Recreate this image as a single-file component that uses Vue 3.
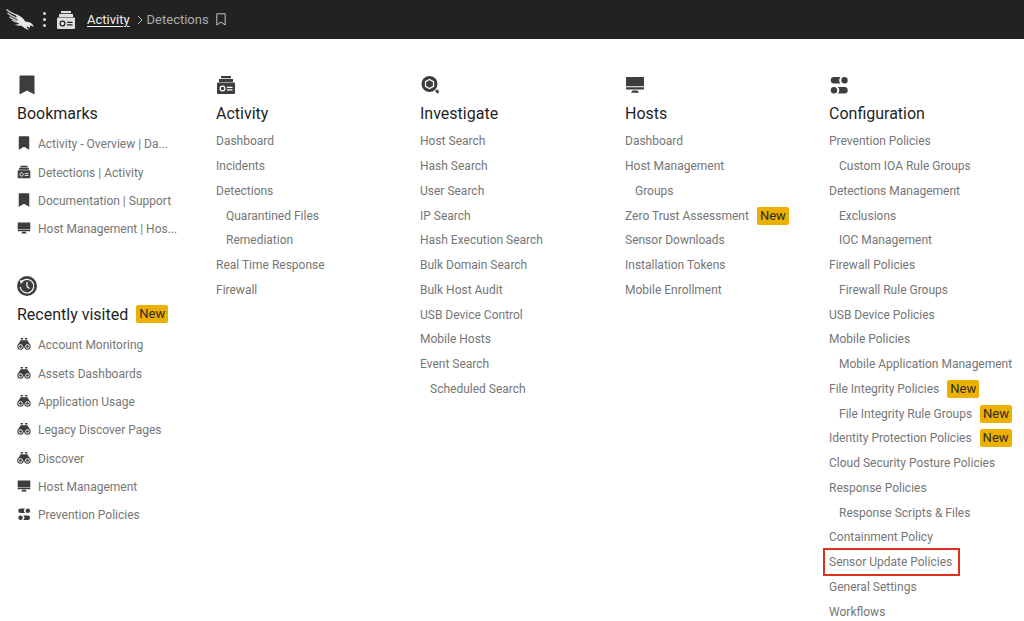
<template>
  <div class="console">
    <!-- Shared icon shapes -->
    <svg class="icon-defs" aria-hidden="true">
      <symbol id="icon-bookmark" viewBox="0 0 20 20">
        <path d="M3.500 0.500h13a1 1 0 0 1 1 1V19.500L10 15.500 2.500 19.500V1.500a1 1 0 0 1 1-1z" />
      </symbol>
      <symbol id="icon-activity" viewBox="0 0 20 20">
        <path d="M5 1h10v2.200H5zM3 3.900h14v3H3zM2 7.600h16a1 1 0 0 1 1 1V18a1 1 0 0 1-1 1H2a1 1 0 0 1-1-1V8.600a1 1 0 0 1 1-1z" />
        <circle class="cut" cx="6.500" cy="13.500" r="2.400" />
        <path class="cut" d="M11 12.300h5.500M11 14.900h5.500" />
      </symbol>
      <symbol id="icon-investigate" viewBox="0 0 20 20">
        <circle cx="9.500" cy="9" r="8" />
        <path class="cut" d="M9.500 4.500l4 2.200v4.600l-4 2.200-4-2.200V6.700z" />
        <path d="M15.100 16.100l1.900-1.900 2.300 2.600-1.900 1.900z" />
      </symbol>
      <symbol id="icon-host" viewBox="0 0 20 20">
        <path d="M1 2h18v9.300H1zM1 12.300h18v1.500a.8.8 0 0 1-.8.8H1.800a.8.8 0 0 1-.8-.8zM7.500 15.500h5l1.500 2.300H6z" />
      </symbol>
      <symbol id="icon-config" viewBox="0 0 20 20">
        <path d="M5 2h6.600a4.300 4.300 0 0 0 0 6.400H5A3.200 3.200 0 0 1 5 2zM15.500 12H8.900a4.300 4.300 0 0 1 0 6.400h6.600a3.200 3.200 0 0 0 0-6.400z" />
        <circle cx="15.500" cy="5.200" r="3.200" />
        <circle cx="5" cy="15.200" r="3.200" />
      </symbol>
      <symbol id="icon-history" viewBox="0 0 20 20">
        <circle cx="10" cy="10" r="10" />
        <path class="cut" d="M4.200 6.500a6.800 6.800 0 1 1-1 4.500M10 6v4.500l2.500 2" />
        <path class="cut-fill" d="M2.800 4.300l4 .2-2.900 3.500z" />
      </symbol>
      <symbol id="icon-binoculars" viewBox="0 0 20 20">
        <path d="M5.200 1.500h3.300v2H5.200zM11.500 1.500h3.300v2h-3.300zM5 4.500h10l3.500 6.500H1.500zM8 10h4v4H8z" />
        <circle cx="5" cy="13.500" r="4.600" />
        <circle cx="15" cy="13.500" r="4.600" />
        <circle class="lens" cx="5" cy="13.500" r="2.600" />
        <circle class="lens" cx="15" cy="13.500" r="2.600" />
      </symbol>
    </svg>

    <header class="topbar">
      <a href="#" class="logo" aria-label="Home">
        <svg viewBox="0 0 28 22">
          <path class="feather" d="M.5.5C4 4 9 5 13 7.500M1.500 4C5 7 9 8.300 13 10.500M3.500 7.800C6.500 10.200 9.500 11.300 14 12.600M6 11.300c3 1.600 5.500 2.200 9 2.700" />
          <path d="M10 5.300c4 1.300 7.300 3.700 9.300 7.300 2.400.6 4.900.5 6.800 2.300 1 .9 1.500 2 1.200 3.100-.9-1-2-1.300-3.500-1.200.3.700.5 1.500 0 2.300-.9-.9-2-1.400-3.400-1.300.6 1 1.500 1.900 2.700 3-3.300-.6-5.400-2.200-7.600-4-2.300.2-4.700-.1-6.500-1.500 2 .3 3.300.1 4.500-.3-1.500-1-2.200-2-2.800-3.300.8.300 1.300.4 1.800.3C11 10.500 10.300 9 10.500 7.600z" />
        </svg>
      </a>
      <button class="menu-button" aria-label="Menu"><i></i><i></i><i></i></button>
      <svg class="section-icon"><use href="#icon-activity" /></svg>
      <nav class="breadcrumb" aria-label="Breadcrumb">
        <a href="#" class="current">Activity</a>
        <svg class="chevron" viewBox="0 0 6 10"><path d="M1 1l4 4-4 4" /></svg>
        <a href="#">Detections</a>
      </nav>
      <button class="bookmark-button" aria-label="Bookmark this page">
        <svg viewBox="0 0 10 13"><path d="M.8.8h8.400v11.200L5 9 .8 12z" /></svg>
      </button>
    </header>

    <main class="mega-menu">
      <div class="column">
        <section v-for="group in personal" :key="group.title" class="group">
          <svg class="group-icon"><use :href="'#icon-' + group.icon" /></svg>
          <h2>{{ group.title }} <span v-if="group.isNew" class="badge">New</span></h2>
          <ul class="shortcuts">
            <li v-for="item in group.items" :key="item.label">
              <svg><use :href="'#icon-' + item.icon" /></svg>
              <a href="#">{{ item.label }}</a>
            </li>
          </ul>
        </section>
      </div>

      <section v-for="group in sections" :key="group.title" class="column">
        <svg class="group-icon"><use :href="'#icon-' + group.icon" /></svg>
        <h2>{{ group.title }}</h2>
        <ul class="links">
          <li v-for="item in group.items" :key="item.label" :class="{ nested: item.nested }">
            <a href="#" :class="{ highlighted: item.highlighted }">{{ item.label }}</a>
            <span v-if="item.isNew" class="badge">New</span>
          </li>
        </ul>
      </section>
    </main>
  </div>
</template>

<script setup>
const personal = [
  {
    title: 'Bookmarks',
    icon: 'bookmark',
    items: [
      { label: 'Activity - Overview | Da...', icon: 'bookmark' },
      { label: 'Detections | Activity', icon: 'activity' },
      { label: 'Documentation | Support', icon: 'bookmark' },
      { label: 'Host Management | Hos...', icon: 'host' }
    ]
  },
  {
    title: 'Recently visited',
    icon: 'history',
    isNew: true,
    items: [
      { label: 'Account Monitoring', icon: 'binoculars' },
      { label: 'Assets Dashboards', icon: 'binoculars' },
      { label: 'Application Usage', icon: 'binoculars' },
      { label: 'Legacy Discover Pages', icon: 'binoculars' },
      { label: 'Discover', icon: 'binoculars' },
      { label: 'Host Management', icon: 'host' },
      { label: 'Prevention Policies', icon: 'config' }
    ]
  }
]

const sections = [
  {
    title: 'Activity',
    icon: 'activity',
    items: [
      { label: 'Dashboard' },
      { label: 'Incidents' },
      { label: 'Detections' },
      { label: 'Quarantined Files', nested: true },
      { label: 'Remediation', nested: true },
      { label: 'Real Time Response' },
      { label: 'Firewall' }
    ]
  },
  {
    title: 'Investigate',
    icon: 'investigate',
    items: [
      { label: 'Host Search' },
      { label: 'Hash Search' },
      { label: 'User Search' },
      { label: 'IP Search' },
      { label: 'Hash Execution Search' },
      { label: 'Bulk Domain Search' },
      { label: 'Bulk Host Audit' },
      { label: 'USB Device Control' },
      { label: 'Mobile Hosts' },
      { label: 'Event Search' },
      { label: 'Scheduled Search', nested: true }
    ]
  },
  {
    title: 'Hosts',
    icon: 'host',
    items: [
      { label: 'Dashboard' },
      { label: 'Host Management' },
      { label: 'Groups', nested: true },
      { label: 'Zero Trust Assessment', isNew: true },
      { label: 'Sensor Downloads' },
      { label: 'Installation Tokens' },
      { label: 'Mobile Enrollment' }
    ]
  },
  {
    title: 'Configuration',
    icon: 'config',
    items: [
      { label: 'Prevention Policies' },
      { label: 'Custom IOA Rule Groups', nested: true },
      { label: 'Detections Management' },
      { label: 'Exclusions', nested: true },
      { label: 'IOC Management', nested: true },
      { label: 'Firewall Policies' },
      { label: 'Firewall Rule Groups', nested: true },
      { label: 'USB Device Policies' },
      { label: 'Mobile Policies' },
      { label: 'Mobile Application Management', nested: true },
      { label: 'File Integrity Policies', isNew: true },
      { label: 'File Integrity Rule Groups', nested: true, isNew: true },
      { label: 'Identity Protection Policies', isNew: true },
      { label: 'Cloud Security Posture Policies' },
      { label: 'Response Policies' },
      { label: 'Response Scripts & Files', nested: true },
      { label: 'Containment Policy' },
      { label: 'Sensor Update Policies', highlighted: true },
      { label: 'General Settings' },
      { label: 'Workflows' }
    ]
  }
]
</script>

<style>
body {
  margin: 0;
  background: #fff;
}
</style>

<style scoped>
.console {
  --cut: #fff;
  font-family: Roboto, "Liberation Sans", sans-serif;
  font-size: 12px;
  color: #767676;
}

.icon-defs {
  position: absolute;
  width: 0;
  height: 0;
}

.cut {
  fill: none;
  stroke: var(--cut);
  stroke-width: 1.2;
}

.cut-fill {
  fill: var(--cut);
}

.lens {
  fill: none;
  stroke: var(--cut);
  stroke-width: 1.4;
}

a {
  color: inherit;
  text-decoration: none;
}

button {
  padding: 0;
  border: 0;
  background: none;
  cursor: pointer;
}

ul {
  margin: 0;
  padding: 0;
  list-style: none;
}

/* Top bar */
.topbar {
  --cut: #222;
  display: flex;
  align-items: center;
  height: 39px;
  padding-left: 6px;
  background: #222;
  color: #a9adb1;
  font-size: 13px;
}

.logo svg {
  display: block;
  width: 28px;
  height: 22px;
  fill: #e6e6e6;
}

.logo .feather {
  fill: none;
  stroke: #d0d0d0;
  stroke-width: 1.3;
}

.menu-button {
  display: flex;
  flex-direction: column;
  gap: 3px;
  margin: 0 10px 0 9px;
}

.menu-button i {
  width: 3px;
  height: 3px;
  border-radius: 50%;
  background: #e0e0e0;
}

.section-icon {
  width: 20px;
  height: 20px;
  margin-right: 11px;
  fill: #dedede;
}

.breadcrumb {
  display: flex;
  align-items: center;
}

.breadcrumb .current {
  color: #f2f2f2;
  text-decoration: underline;
  text-underline-offset: 2px;
}

.chevron {
  width: 6px;
  height: 10px;
  margin: 0 4px 0 7px;
  fill: none;
  stroke: #b8b8b8;
}

.bookmark-button {
  margin-left: 7px;
}

.bookmark-button svg {
  display: block;
  width: 10px;
  height: 13px;
  fill: none;
  stroke: #c8c8c8;
}

/* Menu columns */
.mega-menu {
  display: grid;
  grid-template-columns: 199fr 204fr 205fr 204fr 195fr;
  padding: 36px 0 0 17px;
}

.column {
  min-width: 0;
}

.group + .group {
  margin-top: 33px;
}

.group-icon {
  display: block;
  width: 20px;
  height: 20px;
  fill: #3d3d3d;
}

h2 {
  display: flex;
  align-items: center;
  height: 20px;
  margin: 8px 0 6px;
  font-size: 16px;
  font-weight: 400;
  color: #1f1f1f;
}

.links,
.shortcuts {
  display: grid;
}

.links {
  grid-auto-rows: 24px 25px 25px 25px;
}

.shortcuts {
  padding-top: 1px;
  grid-auto-rows: 28px 29px 28px;
}

li {
  display: flex;
  align-items: center;
  white-space: nowrap;
}

.shortcuts li {
  gap: 7px;
}

.shortcuts svg {
  width: 14px;
  height: 14px;
  margin-bottom: 2px;
  fill: #3d3d3d;
}

.nested {
  padding-left: 10px;
}

.badge {
  margin-left: 8px;
  padding: 0 3px;
  border-radius: 2px;
  background: #ecb000;
  color: #2b2b2b;
  font-size: 13px;
  line-height: 18px;
}

.highlighted {
  margin-left: -6px;
  padding: 5px 6px 5px 4px;
  border: 2px solid #e0301e;
}
</style>
